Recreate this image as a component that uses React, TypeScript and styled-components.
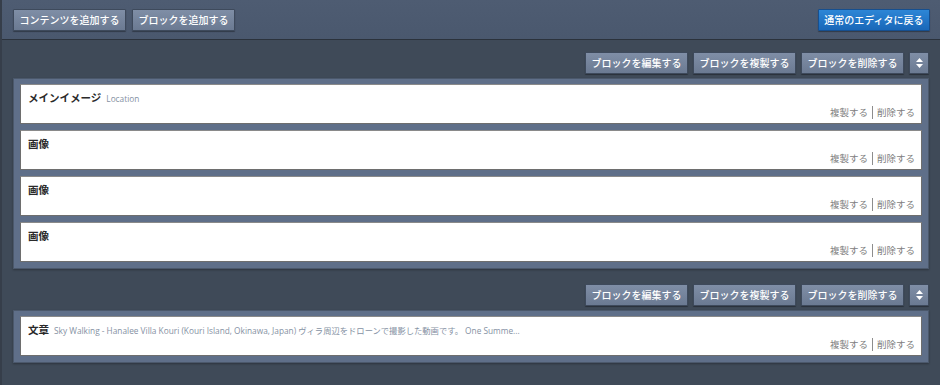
import React from 'react'
import styled, { createGlobalStyle } from 'styled-components'

const GlobalStyle = createGlobalStyle`
  html, body {
    margin: 0;
    padding: 0;
    background: #3f4a58;
    font-family: "Noto Sans CJK JP", "Liberation Sans", sans-serif;
  }
`

const Page = styled.div`
  width: 940px;
  height: 385px;
  box-sizing: border-box;
  border-left: 2px solid #363e4a;
  background: #3f4a58;
  overflow: hidden;
`

const TopBar = styled.div`
  height: 40px;
  box-sizing: border-box;
  display: flex;
  align-items: center;
  gap: 6px;
  padding: 0 10px 0 11px;
  background: linear-gradient(#4e5c72, #4a586e);
  border-bottom: 1px solid #2b323c;
`

const Spacer = styled.div`
  flex: 1;
`

const Button = styled.button<{ $blue?: boolean }>`
  height: 22px;
  box-sizing: border-box;
  padding: 0 5.5px;
  border: 1px solid ${p => (p.$blue ? '#164f8f' : '#3e4a5c')};
  border-radius: 1px;
  background: ${p =>
    p.$blue ? 'linear-gradient(#2d86d6, #1967b8)' : 'linear-gradient(#7f8ea6, #6b7a92)'};
  color: #fff;
  font-family: "Noto Sans CJK JP", sans-serif;
  font-size: 10px;
  font-weight: 500;
  line-height: 20px;
  white-space: nowrap;
  box-shadow: 0 1px 1px rgba(0, 0, 0, 0.35);
  cursor: pointer;
`

const SortButton = styled(Button)`
  width: 20px;
  padding: 0;
  display: flex;
  align-items: center;
  justify-content: center;
`

const Main = styled.div`
  padding: 12px 11px 0 11px;
  display: flex;
  flex-direction: column;
  gap: 15px;
`

const Group = styled.div`
  display: flex;
  flex-direction: column;
  gap: 4px;
`

const Toolbar = styled.div`
  display: flex;
  justify-content: flex-end;
  gap: 5px;
`

const Panel = styled.div`
  background: #5f6f89;
  border: 1px solid #4b586b;
  box-shadow: 0 1px 2px rgba(0, 0, 0, 0.3);
  padding: 5px 6px 6px;
  display: flex;
  flex-direction: column;
  gap: 6px;
`

const Card = styled.div`
  height: 40px;
  box-sizing: border-box;
  background: #fff;
  border: 1px solid #6e6e6e;
  border-top-color: #8a8a8a;
  padding: 6px 6px 0 7px;
  display: flex;
  flex-direction: column;
  justify-content: space-between;
`

const TitleRow = styled.div`
  display: flex;
  align-items: baseline;
  gap: 5px;
  white-space: nowrap;
  overflow: hidden;
`

const Title = styled.span`
  font-size: 10.5px;
  font-weight: 700;
  color: #2a2a2a;
  line-height: 14px;
`

const Sub = styled.span`
  font-size: 8.3px;
  color: #8591a3;
  line-height: 12px;
  font-family: "Open Sans", "Noto Sans CJK JP", sans-serif;
`

const Actions = styled.div`
  display: flex;
  justify-content: flex-end;
  align-items: center;
  font-size: 9.5px;
  color: #7d7d7d;
  line-height: 14px;
  padding-bottom: 4px;
`

const Sep = styled.span`
  width: 1px;
  height: 13px;
  background: #8d8d8d;
  margin: 0 4px;
`

const ArrowsIcon = () => (
  <svg width="7" height="10" viewBox="0 0 7 10">
    <path d="M3.5 0 L7 4 L0 4 Z M0 6 L7 6 L3.5 10 Z" fill="#fff" />
  </svg>
)

const BlockToolbar = () => (
  <Toolbar>
    <Button>ブロックを編集する</Button>
    <Button>ブロックを複製する</Button>
    <Button>ブロックを削除する</Button>
    <SortButton>
      <ArrowsIcon />
    </SortButton>
  </Toolbar>
)

const Item = ({ title, sub }: { title: string; sub?: string }) => (
  <Card>
    <TitleRow>
      <Title>{title}</Title>
      {sub && <Sub>{sub}</Sub>}
    </TitleRow>
    <Actions>
      <span>複製する</span>
      <Sep />
      <span>削除する</span>
    </Actions>
  </Card>
)

const App = () => (
  <Page>
    <GlobalStyle />
    <TopBar>
      <Button>コンテンツを追加する</Button>
      <Button>ブロックを追加する</Button>
      <Spacer />
      <Button $blue>通常のエディタに戻る</Button>
    </TopBar>
    <Main>
      <Group>
        <BlockToolbar />
        <Panel>
          <Item title="メインイメージ" sub="Location" />
          <Item title="画像" />
          <Item title="画像" />
          <Item title="画像" />
        </Panel>
      </Group>
      <Group>
        <BlockToolbar />
        <Panel>
          <Item
            title="文章"
            sub="Sky Walking - Hanalee Villa Kouri (Kouri Island, Okinawa, Japan) ヴィラ周辺をドローンで撮影した動画です。 One Summe..."
          />
        </Panel>
      </Group>
    </Main>
  </Page>
)

export default App
